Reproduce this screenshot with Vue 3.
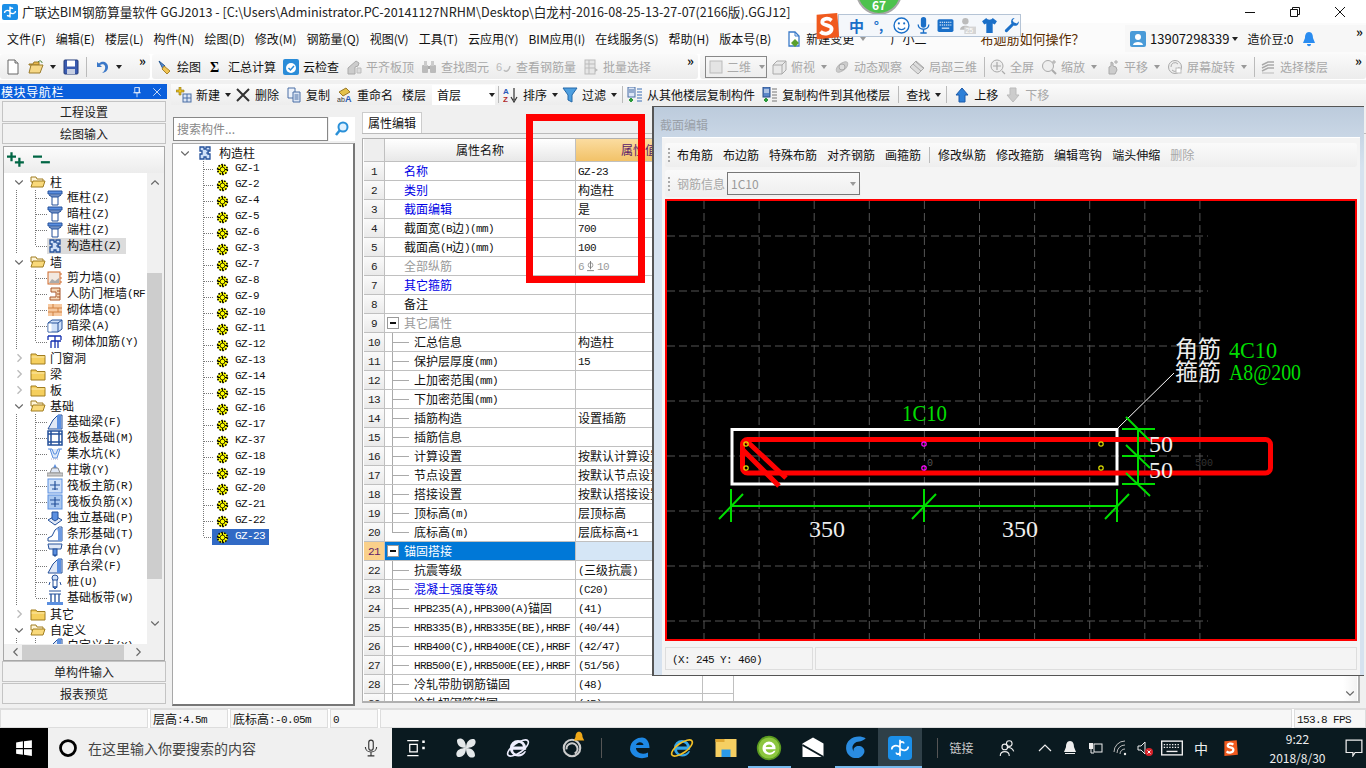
<script setup>
import { h } from 'vue'

const icons = {
  logo: '<rect x="0" y="0" width="16" height="16" rx="2" fill="#1b8fe8"/><path d="M8 2.500v11M8 5.500c0-2 2.500-2 2.500-.5M8 10.500c0 2-2.500 2-2.500.5M2.500 9c0-2.500 3-3.500 5.500-1.500M13.500 7c0 2.500-3 3.500-5.500 1.500" fill="none" stroke="#fff" stroke-width="1.400"/>',
  doc: '<path d="M3 1h7l3 3v11H3z" fill="#fff" stroke="#666"/><path d="M10 1v3h3" fill="#ddd" stroke="#666"/>',
  open: '<path d="M1 5h4l1-2h5v3H1z" fill="#e8b84a" stroke="#9a7a2a"/><path d="M1 14l2-8h12l-3 8z" fill="#f6d887" stroke="#9a7a2a"/><path d="M10 3c2-2 4-1 4 1" fill="none" stroke="#3a7a2a"/>',
  save: '<rect x="1" y="1" width="14" height="14" rx="1" fill="#3a5bb0" stroke="#223a78"/><rect x="4" y="1.500" width="8" height="6" fill="#fff"/><rect x="4" y="10" width="8" height="5" fill="#c7cfe2"/>',
  undo: '<path d="M3 3v5h5L6 6c3-2 6 0 5 4-.4 1.500-1.500 3-3 4 4-.5 6-3 6-6C14 3 8 1 5 4.500z" fill="#3b78c8"/>',
  brush: '<path d="M2 2l6 5-2 3z" fill="#5a8fd8" stroke="#23558f"/><path d="M7 7l6 5-3 3-5-5z" fill="#f1c453" stroke="#a9832a"/>',
  sigma: '<text x="2" y="13" font-size="14" font-weight="700" font-family="Liberation Serif">Σ</text>',
  cloud: '<rect x="0" y="0" width="16" height="16" rx="2" fill="#2a8cd8"/><circle cx="8" cy="9" r="5" fill="#fff"/><path d="M5.500 9l2 2 3.500-4" fill="none" stroke="#2a8cd8" stroke-width="1.500"/>',
  level: '<path d="M2 9l8-7 3 2-1 3-3 1v7H2z" fill="#ccc" stroke="#aaa"/><path d="M11 9h4v5h-4z" fill="#ddd" stroke="#bbb"/>',
  binoc: '<rect x="1" y="6" width="6" height="8" rx="1" fill="#bbb"/><rect x="9" y="6" width="6" height="8" rx="1" fill="#bbb"/><rect x="3" y="2" width="3" height="5" fill="#ccc"/><rect x="10" y="2" width="3" height="5" fill="#ccc"/><rect x="7" y="7" width="2" height="3" fill="#aaa"/>',
  eye: '<text x="0" y="12" font-size="11" fill="#bbb" font-family="Liberation Sans">6</text><path d="M8 11c1 2 5 2 6-4" fill="none" stroke="#bbb" stroke-width="1.500"/>',
  batch: '<rect x="2" y="1" width="10" height="14" fill="#e6e6e6" stroke="#bbb"/><path d="M2 5h10M2 9h10M6 1v14" stroke="#bbb"/><path d="M12 9l3 2-3 2z" fill="#bbb"/>',
  box2d: '<rect x="2" y="2" width="12" height="12" fill="#e4e4e4" stroke="#bbb"/>',
  box3d: '<path d="M2 6l4-4h9v9l-4 4H2z" fill="#e9e9e9" stroke="#aaa"/><path d="M2 6h9v9M11 6l4-4" fill="none" stroke="#aaa"/>',
  orbit: '<ellipse cx="8" cy="8" rx="7" ry="3.500" transform="rotate(-40 8 8)" fill="#ccc" stroke="#bbb"/><circle cx="8" cy="8" r="3" fill="#ddd" stroke="#aaa"/>',
  local: '<path d="M1 8l6-6 8 7-6 6z" fill="#ddd" stroke="#aaa"/><path d="M4 5l8 7M7 3l7 6" stroke="#aaa"/>',
  zf: '<circle cx="7" cy="7" r="6" fill="#eee" stroke="#aaa"/><path d="M7 3v8M3 7h8M12 12l3 3" stroke="#aaa" stroke-width="1.200"/>',
  zoom: '<circle cx="7" cy="7" r="5.500" fill="#eee" stroke="#aaa"/><path d="M11 11l4 4" stroke="#aaa" stroke-width="2"/><path d="M13 1v4M11 3h4" stroke="#aaa"/>',
  pan: '<path d="M5 15V8l2-1V3l2 1v3l3 1 1 3-2 4z" fill="#ccc" stroke="#aaa"/><path d="M12 1v4M10 3h4" stroke="#aaa"/>',
  rotate: '<circle cx="8" cy="8" r="6.500" fill="#eee" stroke="#aaa"/><path d="M4 8a4 4 0 0 1 7-3M12 8a4 4 0 0 1-7 3" fill="none" stroke="#aaa"/><rect x="9" y="9" width="5" height="5" fill="#fff" stroke="#bbb"/>',
  floors: '<path d="M2 6l6-3h6M2 9l6-3h6M2 12l6-3h6" fill="none" stroke="#aaa" stroke-width="1.500"/><path d="M2 14h12" stroke="#bbb"/>',
  newp: '<path d="M3 0v3H0v2h3v3h2V5h3V3H5V0z" fill="#e8c020" stroke="#8c7010" stroke-width=".6"/><rect x="7" y="7" width="8" height="8" fill="#dce6f5" stroke="#4a6fa5"/><path d="M7 11h8M11 7v8" stroke="#4a6fa5"/>',
  del: '<path d="M2 2l12 12M14 2L2 14" stroke="#333" stroke-width="2"/>',
  copy: '<path d="M2 1h7v10H2z" fill="#eef3fb" stroke="#4a6fa5"/><path d="M7 5h7v10H7z" fill="#dce6f5" stroke="#4a6fa5"/><path d="M8.500 8h4M8.500 10h4M8.500 12h4" stroke="#4a6fa5"/>',
  rename: '<path d="M2 5l7-4 4 4-7 4z" fill="#e5c14a" stroke="#9a7a2a"/><text x="0" y="15" font-size="7" fill="#333" font-family="Liberation Sans">ab</text><text x="8" y="15" font-size="9" font-weight="700" fill="#2a5bb8" font-family="Liberation Sans">A</text>',
  sort: '<text x="0" y="7" font-size="8" font-weight="700" fill="#2a5bb8" font-family="Liberation Sans">A</text><text x="0" y="15" font-size="8" font-weight="700" fill="#b02a2a" font-family="Liberation Sans">Z</text><path d="M11 1v12M8 10l3 5 3-5" fill="none" stroke="#333" stroke-width="1.200"/>',
  filter: '<path d="M1 1h14l-5 7v7l-4-2V8z" fill="#4d9fe0" stroke="#2468a8"/>',
  from: '<rect x="1" y="0" width="7" height="10" fill="#dce6f5" stroke="#4a6fa5"/><path d="M2 3h5M2 5h5" stroke="#4a6fa5"/><path d="M4 11v4M2 13h4" stroke="#2a9a3a" stroke-width="2"/><path d="M10 2h5M10 5h5M10 8h5M10 11h5M10 14h5" stroke="#3a6fb5"/>',
  to: '<rect x="1" y="0" width="7" height="10" fill="#5a86c8" stroke="#2a4f8a"/><path d="M2 3h5M2 5h5" stroke="#fff"/><path d="M4 11v4M2 13h4" stroke="#2a9a3a" stroke-width="2"/><path d="M10 2h5M10 5h5M10 8h5M10 11h5M10 14h5" stroke="#777"/>',
  up: '<path d="M8 1l6 7H11v7H5V8H2z" fill="#2c7fd8" stroke="#1c5aa8"/>',
  down: '<path d="M8 15l6-7H11V1H5v7H2z" fill="#ccc" stroke="#bbb"/>',
  plus2: '<path d="M4 1v8M0 5h8" stroke="#064" stroke-width="2"/><path d="M11 6v8M7 10h8" stroke="#064" stroke-width="2"/>',
  minus2: '<path d="M0 5h8" stroke="#064" stroke-width="2"/><path d="M7 10h8" stroke="#064" stroke-width="2"/>',
  fc: '<path d="M1 4h5l1 1.500h8V14H1z" fill="#f5cf5e" stroke="#a07d20"/><path d="M1.500 7h13" stroke="#fbe9ad"/>',
  fo: '<path d="M1 3h5l1 2h6v3H1z" fill="#fff5d8" stroke="#a07d20"/><path d="M1 13l2-6h12l-2 6z" fill="#f9d97a" stroke="#a07d20"/>',
  col: '<path d="M1 1h14v3H1z" fill="#5b8fe0" stroke="#24509a"/><path d="M2 5h12L11 7H5z" fill="#bcd0f0" stroke="#24509a"/><path d="M5 7h6v8H5z" fill="#fff" stroke="#24509a"/>',
  gzc: '<path d="M3 2h4v2h2V2h4v4h-2v3h2v5H9v-2H7v2H3V9h2V6H3z" fill="#cfe0f8" stroke="#24509a" stroke-width="1.300"/><path d="M9 5h3M9 8h3" stroke="#24509a"/>',
  shear: '<rect x="1" y="2" width="12" height="12" fill="#f2e8e0" stroke="#d06a2a"/><path d="M2 13l3-4 3 2 4-3v5z" fill="#aaa"/><path d="M13 4h2M13 8h2M13 12h2" stroke="#d06a2a"/>',
  rfw: '<path d="M4 2h9v12H3v-3h6V6H4z" fill="#f5d8b8" stroke="#a8562a"/><path d="M10 5h3M10 8h3M10 11h3" stroke="#a8562a"/>',
  brick: '<rect x="1" y="2" width="14" height="12" fill="#f7c9a0"/><path d="M1 6h14M1 10h14M6 2v4M11 6v4M6 10v4" stroke="#d08040"/>',
  beam: '<path d="M1 5l4-3h10v9l-4 3H1z" fill="#cfe0f8" stroke="#24509a"/><path d="M1 5h10v9M11 5l4-3" fill="none" stroke="#24509a"/><rect x="1.500" y="5.500" width="3" height="8" fill="#fff"/>',
  jj: '<path d="M1 2h13M1 2v4M14 2v4M4 7h10M8 2v12M4 7v7M11 7v7" fill="none" stroke="#1530b0" stroke-width="1.300"/>',
  jb: '<path d="M1 15l5-9 5-5h4v14z" fill="#e0e8f6" stroke="#24509a"/><path d="M10 1l4 0v14h-4z" fill="#5b8fe0"/>',
  raft: '<rect x="1" y="1" width="14" height="14" fill="#fff" stroke="#24509a" stroke-width="1.500"/><path d="M1 4h14M1 12h14M4 1v14M12 1v14" stroke="#24509a" stroke-width="1.500"/>',
  pit: '<path d="M1 3h4l2 5h2l2-5h4M3 3l3 9h4l3-9" fill="#dde8f8" stroke="#5b8fe0"/><path d="M4 13h8" stroke="#aac" stroke-dasharray="1 1"/>',
  dun: '<path d="M6 6l2-4 2 4z" fill="#5b8fe0"/><path d="M3 11l2-5h6l2 5z" fill="#e0e8f6" stroke="#888"/><rect x="0" y="11" width="16" height="3" fill="#ccc" stroke="#999"/>',
  rm: '<rect x="1" y="1" width="14" height="14" fill="#cfe0f8" stroke="#5b8fe0"/><path d="M3 7h10M8 3v9M5 11h6" stroke="#24509a" stroke-width="1.200"/>',
  rn: '<rect x="1" y="1" width="14" height="14" fill="#aac8f0" stroke="#5b8fe0"/><path d="M3 6h10M8 3v10M4 10h8" stroke="#24509a" stroke-width="1.200"/>',
  ind: '<path d="M1 10l7-4 7 4-7 5z" fill="#e0e8f6" stroke="#24509a"/><path d="M5 2h6v7l-3 2-3-2z" fill="#5b8fe0" stroke="#24509a"/>',
  strip: '<path d="M1 15v-3l4-2 3-6 4-3h3v14z" fill="#fff" stroke="#24509a"/><path d="M10 2h5v13h-4V6z" fill="#6d99e0"/>',
  cap: '<path d="M1 2h14l-1 5H2z" fill="#e0e8f6" stroke="#24509a"/><rect x="6" y="7" width="4" height="6" fill="#5b8fe0" stroke="#24509a"/><path d="M6 13h4l-2 2z" fill="#24509a"/>',
  pile: '<circle cx="8" cy="4" r="3" fill="#cfe0f8" stroke="#24509a"/><rect x="6" y="6" width="4" height="7" fill="#fff" stroke="#24509a"/><path d="M3 8l-1 3M13 8l1 3M6 13h4l-2 2z" fill="#5b8fe0" stroke="#24509a"/>',
  band: '<path d="M2 1h12M2 4h12" stroke="#24509a"/><path d="M4 4v8M8 4v8M12 4v8" stroke="#24509a" stroke-width="1.300"/><rect x="0" y="12" width="16" height="3" fill="#5b8fe0"/>',
  gi: '<circle cx="8" cy="8" r="6.500" fill="#ff0"/><circle cx="8" cy="8" r="6" fill="none" stroke="#000" stroke-width="2" stroke-dasharray="2 1.700"/><path d="M2 8h12M8 2v12" stroke="#000" stroke-width="1.300"/><circle cx="8" cy="8" r="3" fill="#ff0" stroke="#000"/>',
  search: '<circle cx="9" cy="6" r="4.500" fill="#dff1ff" stroke="#2a90d8" stroke-width="2"/><path d="M6 9l-4 5" stroke="#2a90d8" stroke-width="2.500"/>',
  pin: '<path d="M5 2h6v7H5zM3 9h10M8 9v6M11 2v7" fill="none" stroke="#fff"/>',
  x: '<path d="M3 3l10 10M13 3L3 13" stroke="#fff"/>',
  note: '<path d="M3 1h6l4 4v10H3z" fill="#fff" stroke="#3a7ac8" stroke-width="1.300"/><path d="M9 1v4h4" fill="none" stroke="#3a7ac8"/><path d="M9 8l4 4-4 4-4-4z" fill="#5aa02c"/>',
  user: '<rect width="16" height="16" rx="2" fill="#4a9bd8"/><circle cx="8" cy="6" r="3" fill="#fff"/><path d="M3 14c0-4 10-4 10 0z" fill="#fff"/>',
  bell: '<path d="M8 1c-3 0-4 3-4 6l-2 5h12l-2-5c0-3-1-6-4-6z" fill="#2a8cf0"/><path d="M6 13h4c0 3-4 3-4 0z" fill="#2a8cf0"/>',
  win: '<path d="M1 3l6-1v6H1zM8 2l7-1v7H8zM1 9h6v5l-6-1zM8 9h7v6l-7-1z" fill="#fff"/>',
  ring: '<circle cx="8" cy="8" r="6" fill="none" stroke="#000" stroke-width="2.200"/>',
  mic: '<rect x="6" y="1" width="4" height="9" rx="2" fill="none" stroke="#333"/><path d="M3 7c0 6 10 6 10 0M8 12v3M5 15h6" fill="none" stroke="#333"/>',
  tv: '<path d="M1 2h9M1 14h9M3 5h6v6H3z" fill="none" stroke="#fff"/><path d="M13 2h2v2h-2zM13 7h2v2h-2z" fill="#fff"/>',
  fan: '<path d="M8 8C3 8 2 5 2 3c0-2 6-3 6 5zM8 8c0-5 3-6 5-6 2 0 3 6-5 6zM8 8c5 0 6 3 6 5 0 2-6 3-6-5zM8 8c0 5-3 6-5 6-2 0-3-6 5-6z" fill="#e4e8ea"/>',
  ie: '<path d="M3 8a5 5 0 0 1 10 0v1H5c0 3 5 4 7 1h1c-2 5-10 4-10-2zm2-1h6c-.5-3-5-3-6 0z" fill="#eef"/><ellipse cx="8" cy="8" rx="7.500" ry="3" transform="rotate(-35 8 8)" fill="none" stroke="#eef"/>',
  swirl: '<circle cx="8" cy="8" r="6" fill="none" stroke="#ccc" stroke-width="1.500"/><path d="M4 9a4 4 0 1 1 6 3" fill="none" stroke="#ccc" stroke-width="1.500"/>',
  bellY: '<path d="M8 2c-3 0-4 3-4 6l-2 4h12l-2-4c0-3-1-6-4-6z" fill="#f0a818"/>',
  edge: '<path d="M2 9C2 3 7 1 10 1c3 0 5 3 5 7H6c0 3 4 5 8 3v3c-5 2-11 0-12-5zm4-3h5c0-2-4-3-5 0z" fill="#1e88e5"/>',
  iec: '<path d="M3 8a5 5 0 0 1 10 0v1H5c0 3 5 4 7 1h1c-2 5-10 4-10-2zm2-1h6c-.5-3-5-3-6 0z" fill="#35a7ea"/><ellipse cx="8" cy="8" rx="7.500" ry="3" transform="rotate(-35 8 8)" fill="none" stroke="#f2c028"/>',
  fold: '<path d="M1 2h14v12H1z" fill="#f6cf62"/><path d="M1 2h6v2H1z" fill="#e0a832"/><rect x="5" y="9" width="6" height="5" fill="#2a9ae8"/>',
  gre: '<circle cx="8" cy="8" r="7" fill="#8cc63f" stroke="#5a9a20"/><path d="M4 8a4 4 0 0 1 8 0v.7H6c0 2.300 3.500 3 5 1h1c-1.500 3.800-8 3-8-1.700zm2-.6h4c-.4-2-3.500-2-4 0z" fill="#fff"/>',
  mail: '<path d="M1 5l7-4 7 4v9H1z" fill="#fff"/><path d="M1 6l7 4 7 4" fill="none" stroke="#0a1a20" stroke-width="1.300"/>',
  gg: '<path d="M14 2C8-1 1 3 2 9c1 6 9 7 11 2 1-3-2-5-5-4-2 1-2 3 0 4-4-2-2-7 2-7 1 0 3-1 4-2z" fill="#2a8ce0"/>',
  app: '<rect width="16" height="16" rx="2.500" fill="#1b8fe8"/><path d="M8 2.500v11M8 5.500c0-2 2.500-2 2.500-.5M8 10.500c0 2-2.500 2-2.500.5M2.500 9c0-2.500 3-3.500 5.500-1.500M13.500 7c0 2.500-3 3.500-5.500 1.500" fill="none" stroke="#fff" stroke-width="1.100"/>',
  ppl: '<circle cx="10" cy="4" r="2.500" fill="none" stroke="#eee"/><circle cx="6" cy="7" r="2.500" fill="none" stroke="#eee"/><path d="M2 15c0-5 8-5 8 0M8 8c2-1 5 0 6 3" fill="none" stroke="#eee"/>',
  chev: '<path d="M2 11l6-6 6 6" fill="none" stroke="#eee" stroke-width="1.200"/>',
  bellW: '<path d="M8 1c-3 0-4 3-4 6l-2 5h12l-2-5c0-3-1-6-4-6z" fill="#eee"/><path d="M3 13h10v1H3z" fill="#eee"/>',
  plug: '<rect x="6" y="4" width="8" height="8" fill="none" stroke="#eee"/><rect x="1" y="3" width="4" height="6" fill="#eee"/><path d="M3 9v4h3" fill="none" stroke="#eee"/>',
  wifi: '<path d="M1 12a11 11 0 0 1 11-11M4 13a8 8 0 0 1 8-8M7 14a5 5 0 0 1 5-5" fill="none" stroke="#bbb"/><circle cx="12" cy="14" r="1.200" fill="#eee"/>',
  snd: '<path d="M1 6h3l4-4v12l-4-4H1z" fill="none" stroke="#eee"/><circle cx="12" cy="12" r="4" fill="#d8232a"/><path d="M10.500 10.500l3 3M13.500 10.500l-3 3" stroke="#fff"/>',
  kb: '<rect x="0.500" y="3" width="15" height="10" fill="none" stroke="#eee"/><path d="M2 5.500h12M2 7.500h12" stroke="#eee" stroke-dasharray="1 1"/><path d="M4 10.500h8" stroke="#eee"/>',
  sogou: '<path d="M3 2l11-1 1 13-12 1z" fill="#f05a1e"/><path d="M11 5c-2-1.500-5-1-5 1s5 1 5 3.500S7 13 5 11" fill="none" stroke="#fff" stroke-width="2"/>',
  notif: '<path d="M1 1h14v11H9l-2 3v-3H1z" fill="none" stroke="#eee" stroke-width="1.100"/>',
  smile: '<circle cx="8" cy="8" r="7" fill="#fff" stroke="#1a6fc8" stroke-width="1.300"/><circle cx="5.500" cy="6" r="1" fill="#1a6fc8"/><circle cx="10.500" cy="6" r="1" fill="#1a6fc8"/><path d="M4.500 10c1.500 2.500 5.500 2.500 7 0" fill="none" stroke="#1a6fc8"/>',
  micb: '<rect x="5.500" y="0" width="5" height="10" rx="2.500" fill="#1a6fc8"/><path d="M3 7c0 6 10 6 10 0M8 12v3M5 15h6" fill="none" stroke="#1a6fc8" stroke-width="1.300"/>',
  kbb: '<rect x="0.500" y="2" width="15" height="12" rx="1.500" fill="#1a6fc8"/><path d="M2.500 5h11M2.500 7.500h11" stroke="#fff" stroke-dasharray="1.200 .8"/><path d="M4.500 10.500h7" stroke="#fff"/>',
  p25: '<circle cx="6" cy="4" r="3" fill="#bbb"/><path d="M1 12c0-5 10-5 10 0z" fill="#bbb"/><rect x="5" y="9" width="11" height="7" fill="#d5d5d5"/><text x="6" y="15" font-size="6.500" fill="#fff" font-family="Liberation Sans">25</text>',
  shirt: '<path d="M5 1L1 4l2 3 2-1v9h6V6l2 1 2-3-4-3c-1 2-5 2-6 0z" fill="#1a6fc8"/>',
  wrench: '<path d="M11 1c-3 0-4 3-3 5l-6 6c-1 2 1 3 2 2l6-6c3 1 5-1 5-4l-2 2-3-1-1-2z" fill="#1a6fc8"/>',
  dnv: '<path d="M3 6l5 5 5-5" fill="none" stroke="#666" stroke-width="1.500"/>',
  upv: '<path d="M3 10l5-5 5 5" fill="none" stroke="#666" stroke-width="1.500"/>',
  lfv: '<path d="M10 3l-5 5 5 5" fill="none" stroke="#666" stroke-width="1.500"/>',
  rtv: '<path d="M6 3l5 5-5 5" fill="none" stroke="#666" stroke-width="1.500"/>',
  rtg: '<path d="M6 3l5 5-5 5" fill="none" stroke="#bbb" stroke-width="1.800"/>',
  rebar: '<circle cx="8" cy="6" r="3.500" fill="none" stroke="#777"/><path d="M8 0v12M3 14h10" stroke="#777" stroke-width="1.300"/>',
}

const Ico = (p) => h('svg', { width: p.s || 16, height: p.s || 16, viewBox: '0 0 16 16', innerHTML: icons[p.n], class: 'ico' })
Ico.props = ['n', 's']

// Latin runs are in a half-width bitmap face in the reference
const T = (p) => h('span', null, String(p.text).split(/([\x00-\x7f]+)/).filter(Boolean).map((s) =>
  /^[\x00-\x7f]/.test(s) ? h('span', { class: 'lat' }, s) : s))
T.props = ['text']

const menus = [['文件(F)'], ['编辑(E)'], ['楼层(L)'], ['构件(N)'], ['绘图(D)'], ['修改(M)'], ['钢筋量(Q)'], ['视图(V)'], ['工具(T)'], ['云应用(Y)'], ['BIM应用(I)'], ['在线服务(S)'], ['帮助(H)'], ['版本号(B)']]

const tbA = [{ i: 'doc' }, { i: 'open', c: 1 }, { i: 'save' }, { s: 1 }, { i: 'undo', c: 1 }]
const tbB = [
  { i: 'brush', t: '绘图' }, { i: 'sigma', t: '汇总计算' }, { i: 'cloud', t: '云检查' },
  { i: 'level', t: '平齐板顶', g: 1 }, { i: 'binoc', t: '查找图元', g: 1 }, { i: 'eye', t: '查看钢筋量', g: 1 }, { i: 'batch', t: '批量选择', g: 1 },
]
const tbC = [
  { i: 'box3d', t: '俯视', g: 1, c: 1 }, { i: 'orbit', t: '动态观察', g: 1 }, { i: 'local', t: '局部三维', g: 1 }, { s: 1 },
  { i: 'zf', t: '全屏', g: 1 }, { i: 'zoom', t: '缩放', g: 1, c: 1 }, { i: 'pan', t: '平移', g: 1, c: 1 }, { i: 'rotate', t: '屏幕旋转', g: 1, c: 1 }, { s: 1 }, { i: 'floors', t: '选择楼层', g: 1 },
]
const tb2L = [{ i: 'newp', t: '新建', c: 1 }, { i: 'del', t: '删除' }, { i: 'copy', t: '复制' }, { i: 'rename', t: '重命名' }]
const tb2R = [
  { s: 1, tight: 1 }, { i: 'sort', t: '排序', c: 1 }, { i: 'filter', t: '过滤', c: 1 }, { s: 1, tight: 1 }, { i: 'from', t: '从其他楼层复制构件' }, { i: 'to', t: '复制构件到其他楼层' }, { s: 1 },
  { t: '查找', c: 1 }, { s: 1 }, { i: 'up', t: '上移' }, { i: 'down', t: '下移', g: 1 },
]

const nav = [
  { t: '柱', o: 1 }, { t: '框柱(Z)', i: 'col' }, { t: '暗柱(Z)', i: 'col' }, { t: '端柱(Z)', i: 'col' }, { t: '构造柱(Z)', i: 'gzc', sel: 1, last: 1 },
  { t: '墙', o: 1 }, { t: '剪力墙(Q)', i: 'shear' }, { t: '人防门框墙(RF', i: 'rfw' }, { t: '砌体墙(Q)', i: 'brick' }, { t: '暗梁(A)', i: 'beam' }, { t: '砌体加筋(Y)', i: 'jj', last: 1, wide: 1 },
  { t: '门窗洞' }, { t: '梁' }, { t: '板' },
  { t: '基础', o: 1 }, { t: '基础梁(F)', i: 'jb' }, { t: '筏板基础(M)', i: 'raft' }, { t: '集水坑(K)', i: 'pit' }, { t: '柱墩(Y)', i: 'dun' }, { t: '筏板主筋(R)', i: 'rm' }, { t: '筏板负筋(X)', i: 'rn' }, { t: '独立基础(P)', i: 'ind' }, { t: '条形基础(T)', i: 'strip' }, { t: '桩承台(V)', i: 'cap' }, { t: '承台梁(F)', i: 'jb' }, { t: '桩(U)', i: 'pile' }, { t: '基础板带(W)', i: 'band', last: 1 },
  { t: '其它' }, { t: '自定义', o: 1 }, { t: '自定义点(X)', i: 'jb' },
]

const gz = ['GZ-1', 'GZ-2', 'GZ-4', 'GZ-5', 'GZ-6', 'GZ-3', 'GZ-7', 'GZ-8', 'GZ-9', 'GZ-10', 'GZ-11', 'GZ-12', 'GZ-13', 'GZ-14', 'GZ-15', 'GZ-16', 'GZ-17', 'KZ-37', 'GZ-18', 'GZ-19', 'GZ-20', 'GZ-21', 'GZ-22', 'GZ-23']

const props = [
  { n: '名称', v: 'GZ-23', c: 'blue' }, { n: '类别', v: '构造柱', c: 'blue' }, { n: '截面编辑', v: '是', c: 'blue' },
  { n: '截面宽(B边)(mm)', v: '700' }, { n: '截面高(H边)(mm)', v: '100' }, { n: '全部纵筋', v: '6', rebar: '10', c: 'gray' },
  { n: '其它箍筋', v: '', c: 'blue' }, { n: '备注', v: '' }, { n: '其它属性', v: '', c: 'gray', box: 1 },
  { n: '汇总信息', v: '构造柱', k: 1 }, { n: '保护层厚度(mm)', v: '15', k: 1 }, { n: '上加密范围(mm)', v: '', k: 1 }, { n: '下加密范围(mm)', v: '', k: 1 },
  { n: '插筋构造', v: '设置插筋', k: 1 }, { n: '插筋信息', v: '', k: 1 }, { n: '计算设置', v: '按默认计算设置计算', k: 1 }, { n: '节点设置', v: '按默认节点设置计算', k: 1 }, { n: '搭接设置', v: '按默认搭接设置计算', k: 1 },
  { n: '顶标高(m)', v: '层顶标高', k: 1 }, { n: '底标高(m)', v: '层底标高+1', k: 1, end: 1 },
  { n: '锚固搭接', v: '', box: 1, sel: 1 }, { n: '抗震等级', v: '(三级抗震)', k: 1 }, { n: '混凝土强度等级', v: '(C20)', k: 1, c: 'blue' },
  { n: 'HPB235(A),HPB300(A)锚固', v: '(41)', k: 1 }, { n: 'HRB335(B),HRB335E(BE),HRBF', v: '(40/44)', k: 1 }, { n: 'HRB400(C),HRB400E(CE),HRBF', v: '(42/47)', k: 1 }, { n: 'HRB500(E),HRB500E(EE),HRBF', v: '(51/56)', k: 1 },
  { n: '冷轧带肋钢筋锚固', v: '(48)', k: 1 }, { n: '冷轧扭钢筋锚固', v: '(45)', k: 1 },
]

const dlgTools = ['布角筋', '布边筋', '特殊布筋', '对齐钢筋', '画箍筋', null, '修改纵筋', '修改箍筋', '编辑弯钩', '端头伸缩']

const gridX = Array.from({ length: 10 }, (_, i) => 704 + i * 55.1)
const gridY = Array.from({ length: 8 }, (_, i) => 236 + i * 55)

const taskA = [{ i: 'tv', w: 48, s: 20 }, { i: 'fan', w: 52, s: 24 }, { i: 'ie', w: 52, s: 26 }, { i: 'swirl', w: 56, s: 22, bell: 1 }]
const taskB = [{ i: 'edge', s: 24 }, { i: 'iec', s: 26 }, { i: 'fold', s: 24 }, { i: 'gre', s: 26, u: 1 }, { i: 'mail', s: 24 }, { i: 'gg', s: 26, u: 1 }, { i: 'app', s: 24, u: 1, a: 1 }]
const tray = [{ i: 'chev', w: 25 }, { i: 'bellW', w: 25 }, { i: 'plug', w: 26 }, { i: 'wifi', w: 24 }, { i: 'snd', w: 25 }, { i: 'kb', w: 29, s: 22 }]
</script>

<template>
  <div class="app">
    <div class="titlebar">
      <Ico n="logo" />
      <span class="ttl">广联达BIM钢筋算量软件 GGJ2013 - [C:\Users\Administrator.PC-20141127NRHM\Desktop\白龙村-2016-08-25-13-27-07(2166版).GGJ12]</span>
      <div class="winbtns">
        <svg width="12" height="12" viewBox="0 0 12 12"><path d="M1 6.500h10" stroke="#111" /></svg>
        <svg width="12" height="12" viewBox="0 0 12 12"><path d="M1.500 3.500h7v7h-7zM3.500 3.500v-2h7v7h-2" fill="none" stroke="#111" /></svg>
        <svg width="12" height="12" viewBox="0 0 12 12"><path d="M1 1l10 10M11 1L1 11" stroke="#111" /></svg>
      </div>
    </div>

    <div class="menubar">
      <span v-for="m in menus" :key="m[0]" class="mi">{{ m[0] }}</span>
      <div class="mi-new"><Ico n="note" /><span>新建变更</span><i class="caret"></i></div>
      <span class="mi-xe">广小二</span>
      <span class="mi-ask">布迦筋如何操作？</span>
      <div class="userbox">
        <Ico n="user" /><span class="phone">13907298339</span><i class="caret dark"></i>
        <span class="bean">造价豆:0</span><Ico n="bell" />
        <span class="more">»</span>
      </div>
    </div>

    <div class="tb1">
      <div class="seg seg-a">
        <template v-for="(it, k) in tbA" :key="k">
          <span v-if="it.s" class="sep"></span>
          <span v-else class="ti"><Ico :n="it.i" /><i v-if="it.c" class="caret dark"></i></span>
        </template>
        <span class="more seg-more">»</span>
      </div>
      <div class="seg seg-b">
        <span v-for="it in tbB" :key="it.t" class="ti" :class="{ off: it.g }"><Ico :n="it.i" /><span>{{ it.t }}</span></span>
        <span class="more seg-more">»</span>
      </div>
      <div class="seg seg-c">
        <div class="combo2d"><Ico n="box2d" /><span>二维</span><i class="caret"></i></div>
        <template v-for="(it, k) in tbC" :key="k">
          <span v-if="it.s" class="sep"></span>
          <span v-else class="ti off"><Ico :n="it.i" /><span>{{ it.t }}</span><i v-if="it.c" class="caret"></i></span>
        </template>
        <span class="more seg-more">»</span>
      </div>
    </div>

    <div class="main">
      <aside class="left">
        <div class="navhead"><span class="navt">模块导航栏</span><span class="navbtns"><Ico n="pin" :s="12" /><Ico n="x" :s="12" /></span></div>
        <div class="lbtn first">工程设置</div>
        <div class="lbtn">绘图输入</div>
        <div class="treewrap">
          <div class="treetools"><Ico n="plus2" :s="18" /><Ico n="minus2" :s="18" /></div>
          <div class="treebody">
            <div class="treeclip">
              <div v-for="r in nav" :key="r.t" class="nrow" :class="{ kid: r.i, lastk: r.last }">
                <template v-if="r.i">
                  <span class="nic" :class="{ sel: r.sel }"><Ico :n="r.i" /><span class="nt" :class="{ w: r.wide }"><T :text="r.t" /></span></span>
                </template>
                <template v-else>
                  <Ico :n="r.o ? 'dnv' : 'rtg'" :s="12" class="ar" />
                  <Ico :n="r.o ? 'fo' : 'fc'" />
                  <span class="nf">{{ r.t }}</span>
                </template>
              </div>
            </div>
            <div class="vsb"><Ico n="upv" :s="12" /><div class="vthumb"></div><Ico n="dnv" :s="12" /></div>
          </div>
          <div class="hsb"><Ico n="lfv" :s="12" /><div class="hthumb"></div><Ico n="rtv" :s="12" /></div>
        </div>
        <div class="lbtn">单构件输入</div>
        <div class="lbtn">报表预览</div>
      </aside>

      <div class="right">
        <div class="tb2">
          <span v-for="it in tb2L" :key="it.t" class="ti"><Ico :n="it.i" /><span>{{ it.t }}</span><i v-if="it.c" class="caret dark"></i></span>
          <span class="lvl">楼层</span>
          <div class="lvlcombo"><span>首层</span><i class="caret dark"></i></div>
          <template v-for="(it, k) in tb2R" :key="k">
            <span v-if="it.s" class="sep" :class="{ tight: it.tight }"></span>
            <span v-else class="ti" :class="{ off: it.g }"><Ico v-if="it.i" :n="it.i" /><span>{{ it.t }}</span><i v-if="it.c" class="caret dark"></i></span>
          </template>
        </div>
        <div class="work">
          <div class="mid">
            <div class="searchrow"><span class="searchbox">搜索构件...</span><span class="searchbtn"><Ico n="search" /></span></div>
            <div class="gztree">
              <div class="grow head"><Ico n="dnv" :s="12" class="ar2" /><Ico n="gzc" /><span class="gh">构造柱</span></div>
              <div v-for="(g, k) in gz" :key="g" class="grow gk" :class="{ lastk: k === gz.length - 1 }">
                <span class="gitem" :class="{ sel: g === 'GZ-23' }"><Ico n="gi" :s="13" /><span class="lat gt">{{ g }}</span></span>
              </div>
            </div>
          </div>

          <div class="prop">
            <div class="tabs"><span class="tab">属性编辑</span></div>
            <div class="ptable">
              <div class="pcols">
                <div class="prow phead">
                  <span class="gut"></span><span class="pn hn">属性名称</span><span class="pv hv">属性值</span><span class="px"></span>
                </div>
                <div v-for="(r, k) in props" :key="k" class="prow" :class="{ psel: r.sel }">
                  <span class="gut"><span class="lat">{{ k + 1 }}</span></span>
                  <span class="pn" :class="[r.c, { kid: r.k, kend: r.end }]">
                    <span v-if="r.box" class="minus"><i></i></span>
                    <T :text="r.n" />
                  </span>
                  <span class="pv" :class="{ gray: r.c === 'gray' }">
                    <T :text="r.v" />
                    <template v-if="r.rebar"><Ico n="rebar" :s="11" class="rb" /><span class="lat">{{ r.rebar }}</span></template>
                  </span>
                  <span class="px"></span>
                </div>
              </div>
              <div class="psb"><Ico n="dnv" :s="12" /></div>
            </div>
          </div>
        </div>
      </div>
    </div>

    <div class="status">
      <span class="sc s1"></span>
      <span class="sc s2"><T text="层高:4.5m" /></span>
      <span class="sc s3"><T text="底标高:-0.05m" /></span>
      <span class="sc s4"><T text="0" /></span>
      <span class="sc s5"></span>
      <span class="sc s6"><T text="153.8 FPS" /></span>
    </div>

    <div class="taskbar">
      <div class="tstart"><Ico n="win" :s="18" /></div>
      <div class="tsearch"><Ico n="ring" :s="20" /><span class="tq">在这里输入你要搜索的内容</span><Ico n="mic" :s="18" class="tmic" /></div>
      <span v-for="it in taskA" :key="it.i" class="tsk" :style="{ width: it.w + 'px' }">
        <Ico :n="it.i" :s="it.s" /><Ico v-if="it.bell" n="bellY" :s="14" class="tbell" />
      </span>
      <span class="tsep"></span>
      <span class="tgap"></span>
      <span v-for="it in taskB" :key="it.i" class="tsb" :class="{ act: it.a, und: it.u }"><Ico :n="it.i" :s="it.s" /></span>
      <span class="tsep t2"></span>
      <span class="tlink">链接</span>
      <span class="tppl"><Ico n="ppl" :s="18" /></span>
      <span v-for="it in tray" :key="it.i" class="ttr" :style="{ width: it.w + 'px' }"><Ico :n="it.i" :s="it.s || 16" /></span>
      <span class="tzh">中</span>
      <span class="tsg"><Ico n="sogou" :s="18" /></span>
      <span class="clock"><span>9:22</span><span>2018/8/30</span></span>
      <span class="tnotif"><Ico n="notif" :s="18" /></span>
    </div>

    <!-- floating section editor window -->
    <section class="dlg">
      <header class="dlgt">截面编辑</header>
      <div class="dlgc">
        <div class="dtb">
          <span class="grip"></span>
          <template v-for="(t, k) in dlgTools" :key="k">
            <span v-if="!t" class="sep"></span>
            <span v-else class="dti">{{ t }}</span>
          </template>
          <span class="dti off">删除</span>
        </div>
        <div class="dtb2">
          <span class="grip"></span><span class="off">钢筋信息</span>
          <div class="dcombo"><span>1C10</span><i class="caret"></i></div>
        </div>
        <div class="canvas">
          <svg width="688" height="438" viewBox="667 201 688 438" class="cv">
            <g stroke="#555" stroke-dasharray="8 4" stroke-width="1">
              <line v-for="x in gridX" :key="x" :x1="x" :x2="x" y1="201" y2="639" />
              <line v-for="y in gridY" :key="y" x1="667" x2="1208" :y1="y" :y2="y" />
            </g>
            <rect x="732" y="429.500" width="385" height="54.500" fill="none" stroke="#fff" stroke-width="3" />
            <path d="M1118 428l56-55" stroke="#fff" fill="none" />
            <g fill="none" stroke="#f00" stroke-width="5">
              <rect x="742.500" y="439.500" width="528" height="33.500" rx="5" />
              <path d="M745.500 440l40.500 38M743 450l36 36" />
            </g>
            <g fill="none" stroke-width="1.200">
              <circle cx="746" cy="444" r="2.200" stroke="#dd0" /><circle cx="746" cy="468" r="2.200" stroke="#dd0" />
              <circle cx="1101" cy="444" r="2.200" stroke="#dd0" /><circle cx="1101" cy="468" r="2.200" stroke="#dd0" />
              <circle cx="924" cy="444" r="2.200" stroke="#f0f" /><circle cx="924" cy="468" r="2.200" stroke="#f0f" />
            </g>
            <g stroke="#0d0" stroke-width="2" fill="none">
              <path d="M731 506h386M731 489v33M924 489v33M1117 489v33" />
              <path d="M719 519l24-25M912 519l24-25M1105 519l24-25" />
              <path d="M1138 429v55M1122 429h33M1122 456h33M1122 484h33" />
              <path d="M1126 417l24 24M1126 445l24 23M1126 473l24 23" />
            </g>
            <text x="927" y="466" class="cvs" fill="#555">0</text>
            <text x="1195" y="466" class="cvs" fill="#333">500</text>
            <g class="cvt">
              <text x="902" y="421" fill="#0d0" textLength="45" lengthAdjust="spacingAndGlyphs">1C10</text>
              <text x="809" y="537" fill="#eee">350</text>
              <text x="1002" y="537" fill="#eee">350</text>
              <text x="1149" y="452" fill="#eee">50</text>
              <text x="1149" y="478" fill="#eee">50</text>
              <text x="1229" y="358" fill="#0d0" textLength="48" lengthAdjust="spacingAndGlyphs">4C10</text>
              <text x="1229" y="380" fill="#0d0" textLength="72" lengthAdjust="spacingAndGlyphs">A8@200</text>
              <text x="1175" y="357" fill="#eee" class="cj">角筋</text>
              <text x="1175" y="380" fill="#eee" class="cj">箍筋</text>
            </g>
          </svg>
        </div>
        <div class="dstatus"><span class="d1"><span class="lat">(X: 245 Y: 460)</span></span><span class="d2"></span></div>
      </div>
    </section>

    <!-- red markup drawn over the screenshot -->
    <div class="mark"></div>

    <!-- input-method bar and its floating widgets -->
    <div class="badge"><span>67</span></div>
    <div class="ime">
      <span class="imz">中</span><span class="imd">°,</span>
      <Ico n="smile" :s="17" /><Ico n="micb" :s="17" /><Ico n="kbb" :s="17" /><Ico n="p25" :s="17" /><Ico n="shirt" :s="17" /><Ico n="wrench" :s="17" />
    </div>
    <div class="imelogo"><Ico n="sogou" :s="30" /></div>
  </div>
</template>

<style scoped>
.app { width: 1366px; height: 768px; position: relative; overflow: hidden; display: flex; flex-direction: column; background: #f0f0f0; color: #111; font: 12px/16px "Noto Sans CJK SC", "Liberation Sans", sans-serif; white-space: nowrap; }
.ico { flex: none; display: block; }
i { font-style: normal; }

.titlebar { height: 23px; flex: none; display: flex; align-items: center; background: #fff; padding-left: 2px; }
.ttl { margin-left: 4px; font-size: 12.600px; color: #222; }
.winbtns { margin-left: auto; display: flex; gap: 33px; padding-right: 20px; }

.menubar { height: 31px; flex: none; display: flex; align-items: center; background: #fbfbfb; padding-left: 7px; }
.mi { margin-right: 10px; }
.mi-new { display: flex; align-items: center; gap: 4px; margin-left: 5px; }
.mi-xe { margin-left: 24px; }
.mi-ask { margin-left: 54px; color: #5a2d00; font-size: 13px; }
.userbox { margin-left: auto; width: 241px; height: 27px; display: flex; align-items: center; gap: 4px; background: #f7f7f7; padding-left: 5px; box-sizing: border-box; }
.phone { font-size: 13px; }
.userbox .caret { margin-left: -1px; }
.bean { margin-left: 5px; }
.userbox .ico:nth-of-type(2) { margin-left: 4px; }
.more { font-size: 13px; line-height: 14px; font-weight: 700; color: #111; margin-left: auto; padding-right: 3px; align-self: flex-start; }

.caret { display: inline-block; width: 0; height: 0; border: 3px solid transparent; border-top: 4px solid #999; border-bottom: 0; margin-left: 2px; flex: none; }
.caret.dark { border-top-color: #222; }

.tb1 { height: 26px; flex: none; margin-bottom: 4px; display: flex; gap: 2px; background: #fff; }
.seg { display: flex; align-items: center; gap: 7px; background: linear-gradient(#fafafa, #ececec); border-radius: 3px; height: 25px; }
.seg-a { width: 150px; padding-left: 5px; box-sizing: border-box; }
.seg-b { width: 546px; padding-left: 5px; box-sizing: border-box; }
.seg-c { flex: 1; padding-left: 5px; }
.seg-c .sep { margin-right: -2px; }
.seg-more { padding-right: 4px; }
.ti { display: inline-flex; align-items: center; gap: 4px; }
.off { color: #a8a8a8; }
.sep { width: 1px; height: 20px; background: #bbb; flex: none; }
.combo2d { width: 62px; height: 22px; box-sizing: border-box; border: 1px solid #888; display: flex; align-items: center; gap: 3px; color: #aaa; padding-left: 2px; margin-right: -3px; }
.combo2d .caret { margin-left: 5px; }

.main { flex: 1; min-height: 0; display: flex; background: #f0f0f0; }

.left { width: 167px; flex: none; display: flex; flex-direction: column; }
.navhead { height: 15px; flex: none; background: #0a5fdc; color: #fff; display: flex; align-items: center; justify-content: space-between; padding: 0 2px 0 1px; }
.navt { letter-spacing: .6px; }
.navbtns { display: flex; gap: 8px; padding-right: 2px; }
.lbtn { height: 21px; flex: none; margin: 0 1px 1px 2px; box-sizing: border-box; border: 1px solid #c4c4c4; background: #f2f2f2; display: flex; align-items: center; justify-content: center; color: #222; }
.lbtn.first { margin-top: 2px; }
.treewrap { height: 515px; flex: none; margin: 1px 2px 0 3px; box-sizing: border-box; border: 1px solid #a8a8a8; padding-right: 2px; display: flex; flex-direction: column; background: #f0f0f0; }
.treetools { height: 26px; flex: none; display: flex; align-items: center; gap: 8px; padding-left: 3px; background: linear-gradient(#fcfcfc, #ececec); margin-right: -2px; }
.treebody { flex: 1; min-height: 0; display: flex; }
.treeclip { flex: 1; min-width: 0; overflow: hidden; background: #fff; padding-top: 1px; }
.nrow { height: 16px; display: flex; align-items: center; padding-left: 9px; }
.nrow .ar { margin-right: 5px; }
.nf { margin-left: 4px; font-size: 12px; }
.nrow.kid {
  background:
    repeating-linear-gradient(#777 0 1px, transparent 1px 2px) 12px 0/1px 100% no-repeat,
    repeating-linear-gradient(#777 0 1px, transparent 1px 2px) 31px 0/1px 100% no-repeat,
    repeating-linear-gradient(90deg, #777 0 1px, transparent 1px 2px) 32px 8px/12px 1px no-repeat;
  padding-left: 43px;
}
.nrow.kid.lastk {
  background:
    repeating-linear-gradient(#777 0 1px, transparent 1px 2px) 12px 0/1px 100% no-repeat,
    repeating-linear-gradient(#777 0 1px, transparent 1px 2px) 31px 0/1px 8px no-repeat,
    repeating-linear-gradient(90deg, #777 0 1px, transparent 1px 2px) 32px 8px/12px 1px no-repeat;
}
.nic { display: flex; align-items: center; height: 16px; }
.nic.sel { background: #dcdcdc; padding-right: 5px; }
.nt { margin-left: 4px; }
.nt.w { margin-left: 9px; }
.vsb { width: 15px; flex: none; display: flex; flex-direction: column; align-items: center; background: #f0f0f0; padding-top: 4px; box-sizing: border-box; }
.vthumb { width: 15px; height: 306px; background: #cdcdcd; margin: 84px 0 38px; flex: none; }
.hsb { height: 16px; flex: none; display: flex; align-items: center; background: #f0f0f0; padding-left: 6px; }
.hthumb { width: 102px; height: 15px; background: #cdcdcd; margin: 0 8px 0 0; }

.right { flex: 1; min-width: 0; display: flex; flex-direction: column; }
.tb2 { height: 21px; flex: none; display: flex; align-items: center; gap: 7px; padding-left: 5px; margin-left: 4px; background: linear-gradient(#fbfbfb, #ededed); box-sizing: border-box; }
.tb2 .sep { height: 17px; }
.tb2 .sep.tight { margin-right: -3px; }
.tb2 .caret { margin: 0 -3px 0 1px; }
.lvl { margin-left: 2px; }
.lvlcombo { width: 63px; height: 20px; display: flex; align-items: center; justify-content: space-between; background: #fff; padding: 0 3px 0 5px; box-sizing: border-box; margin: 0 -4px 0 -1px; }
.tb2 .ti + .sep { margin-left: 1px; }
.work { flex: 1; min-height: 0; display: flex; }

.mid { width: 183px; margin-left: 5px; flex: none; display: flex; flex-direction: column; }
.searchrow { height: 24px; flex: none; margin: 12px 0 2px 0; display: flex; gap: 1px; }
.searchbox { width: 155px; box-sizing: border-box; border: 1px solid #888; background: #fff; color: #888; padding: 3px 3px; margin-left: 1px; }
.searchbtn { flex: 1; background: #fff; display: flex; align-items: center; justify-content: center; }
.gztree { flex: 1; min-height: 0; box-sizing: border-box; margin-bottom: 2px; border: 1px solid #a8a8a8; border-right: 2px solid #777; border-bottom: 2px solid #777; background: #fff; padding-top: 1px; overflow: hidden; }
.grow { height: 16px; display: flex; align-items: center; }
.grow.head { padding-left: 6px; }
.ar2 { margin-right: 6px; }
.gh { margin-left: 6px; }
.grow.gk {
  padding-left: 39px;
  background:
    repeating-linear-gradient(#777 0 1px, transparent 1px 2px) 30px 0/1px 100% no-repeat,
    repeating-linear-gradient(90deg, #777 0 1px, transparent 1px 2px) 31px 8px/9px 1px no-repeat;
}
.grow.gk.lastk {
  background:
    repeating-linear-gradient(#777 0 1px, transparent 1px 2px) 30px 0/1px 8px no-repeat,
    repeating-linear-gradient(90deg, #777 0 1px, transparent 1px 2px) 31px 8px/9px 1px no-repeat;
}
.gitem { display: flex; align-items: center; height: 16px; padding: 0 4px 0 4px; }
.gt { margin-left: 6px; }
.gitem.sel { background: #316ac5; color: #fff; }

.prop { flex: 1; min-width: 0; margin-left: 7px; display: flex; flex-direction: column; padding-top: 7px; margin-right: 6px; }
.tabs { height: 21px; flex: none; border-bottom: 1px solid #bbb; margin-right: -6px; }
.tab { display: inline-block; box-sizing: border-box; height: 21px; width: 60px; background: #fff; border: 1px solid #ccc; border-bottom: 0; text-align: center; line-height: 20px; }
.ptable { flex: 1; min-height: 0; margin-top: 4px; margin-bottom: 5px; background: #fff; border: 1px solid #b0b0b0; border-width: 1px 2px 2px 1px; box-sizing: border-box; display: flex; overflow: hidden; }
.pcols { flex: 1; min-width: 0; overflow: hidden; padding-left: 1px; }
.prow { display: grid; grid-template-columns: 21px 191px 127px 31px; width: 370px; height: 19px; }
.prow > span { box-sizing: border-box; border-bottom: 1px solid #c0c0c0; border-right: 1px solid #c0c0c0; overflow: hidden; display: block; line-height: 18px; }
.gut { background: linear-gradient(#fafafa, #eaeaea); text-align: center; color: #222; }
.pn { padding-left: 19px; position: relative; }
.pv { padding-left: 2px; color: #111; }
.phead { height: 23px; }
.phead > span { line-height: 22px; }
.hn { text-align: center; padding-left: 0; background: linear-gradient(#fff, #e8e8e8); }
.hv { text-align: center; padding-left: 0; color: #5a1a6a; background: linear-gradient(#fbdca0, #f2c268); }
.phead .gut { background: #eee; }
.blue { color: #0000e6; }
.gray { color: #9a9a9a; }
.pn.kid {
  padding-left: 29px;
  background:
    linear-gradient(#aaa, #aaa) 7px 0/1px 100% no-repeat,
    linear-gradient(#aaa, #aaa) 8px 9px/16px 1px no-repeat;
}
.pn.kid.kend {
  background:
    linear-gradient(#aaa, #aaa) 7px 0/1px 10px no-repeat,
    linear-gradient(#aaa, #aaa) 8px 9px/16px 1px no-repeat;
}
.minus { position: absolute; left: 2px; top: 3px; width: 12px; height: 12px; box-sizing: border-box; border: 1px solid #999; background: #fff; }
.minus i { position: absolute; left: 2px; top: 4px; width: 6px; height: 2px; background: #111; }
.psel .gut { background: #fad08a; color: #5a1a6a; }
.psel .pn { background: #0078d7; color: #fff; }
.psel .pv { background: #d5e6f6; }
.rb { display: inline-block; vertical-align: -1px; margin: 0 1px; }
.psb { width: 14px; flex: none; margin-right: 1px; display: flex; align-items: flex-end; justify-content: center; background: linear-gradient(90deg, #fff, #f2f2f2); padding-bottom: 2px; }

.status { height: 20px; flex: none; display: flex; gap: 2px; background: #fff; border-top: 1px solid #ddd; box-sizing: border-box; }
.sc { box-sizing: border-box; border: 1px solid #ddd; background: #f7f7f7; padding-left: 2px; line-height: 17px; height: 19px; }
.s1 { width: 148px; } .s2 { width: 78px; } .s3 { width: 98px; } .s4 { width: 48px; } .s5 { width: 912px; } .s6 { flex: 1; }

.taskbar { height: 40px; flex: none; display: flex; align-items: center; background: #0a1a20; color: #eee; }
.tstart { width: 48px; height: 40px; background: #000; display: flex; align-items: center; justify-content: center; flex: none; }
.tsearch { width: 344px; height: 40px; flex: none; background: #f0f0f0; display: flex; align-items: center; box-sizing: border-box; padding-left: 10px; color: #444; }
.tq { margin-left: 10px; font-size: 14px; }
.tmic { margin-left: auto; margin-right: 12px; }
.tsk { display: flex; align-items: center; justify-content: center; position: relative; height: 40px; }
.tbell { position: absolute; left: 28px; top: 2px; }
.tsep { width: 1px; height: 20px; background: #555; margin-left: 1px; flex: none; }
.tgap { width: 15px; flex: none; }
.tsb { width: 43.500px; height: 40px; display: flex; align-items: center; justify-content: center; flex: none; box-sizing: border-box; }
.tsb.und { border-bottom: 2px solid #76b9ed; padding-top: 2px; }
.tsb.act { background: #2f4048; }
.t2 { margin-left: 15px; }
.tlink { margin-left: 12px; width: 26px; color: #ccc; }
.tppl { margin-left: 22px; width: 27px; margin-right: 8px; }
.ttr { display: flex; align-items: center; justify-content: center; height: 40px; flex: none; }
.tzh { width: 29px; text-align: center; font-size: 14px; }
.tsg { width: 28px; display: flex; justify-content: center; }
.clock { width: 68px; margin-left: 20px; display: flex; flex-direction: column; align-items: center; line-height: 19px; }
.tnotif { margin-left: 13px; }

.dlg { position: absolute; left: 652px; top: 106px; width: 712px; height: 570px; box-sizing: border-box; border: 2px solid #555; border-width: 1px 0 1px 2px; display: flex; flex-direction: column; background: linear-gradient(#bccbdc, #d6e2ef 60px); padding: 0 4px 0 8px; }
.dlgt { height: 30px; flex: none; line-height: 36px; color: #9aa0a8; font-size: 12px; margin-left: -2px; }
.dlgc { flex: 1; min-height: 0; background: #f4f4f4; border-top: 1px solid #fff; display: flex; flex-direction: column; padding: 5px 3px 5px 3px; }
.dtb { height: 24px; flex: none; display: flex; align-items: center; gap: 10px; background: linear-gradient(#fafafa, #eee); border-radius: 3px; }
.grip { width: 2px; height: 14px; margin-left: 3px; margin-right: -3px; border-left: 2px dotted #aaa; flex: none; }
.dtb .sep { height: 16px; margin: 0 -2px; }
.dtb .grip + .dti { margin-left: -2px; }
.dtb2 { height: 27px; width: 196px; margin-top: 3px; flex: none; display: flex; align-items: center; gap: 2px; background: linear-gradient(#fafafa, #eee); border-radius: 3px; }
.dtb2 .grip { margin-right: 3px; }
.dcombo { width: 133px; height: 23px; box-sizing: border-box; border: 1px solid #777; display: flex; align-items: center; justify-content: space-between; padding: 0 3px; color: #999; }
.canvas { flex: none; height: 442px; margin-top: 2px; border: 2px solid #f00; background: #000; box-sizing: border-box; }
.cv { display: block; }
.cvs { font-family: "Liberation Mono", monospace; font-size: 10px; }
.cvt text { font-family: "Liberation Serif", serif; font-size: 24px; }
.cvt text.cj { font-family: "Noto Sans CJK SC", sans-serif; font-size: 23px; }
.dstatus { margin-top: 6px; height: 23px; flex: none; display: flex; gap: 2px; }
.d1 { width: 148px; border: 1px solid #ddd; box-sizing: border-box; padding: 3px 6px; }
.d2 { flex: 1; border: 1px solid #ddd; }

.mark { position: absolute; left: 526px; top: 114px; width: 119px; height: 169px; box-sizing: border-box; border: 7px solid #f00; }

.badge { position: absolute; left: 856px; top: -31px; width: 46px; height: 46px; box-sizing: border-box; border-radius: 50%; border: 2px solid #a8a8a8; background: #4cc24c; color: #fff; font-weight: 700; font-size: 12px; display: flex; justify-content: center; align-items: flex-end; padding-bottom: 1px; line-height: 14px; }
.ime { position: absolute; left: 838px; top: 14px; width: 183px; height: 23px; box-sizing: border-box; border: 1px solid #b5c4d6; background: #f4f7fb; display: flex; align-items: center; gap: 5px; padding-left: 10px; }
.imz { color: #1a6fc8; font-weight: 700; font-size: 15px; width: 16px; }
.imd { color: #1a6fc8; font-weight: 700; font-size: 13px; width: 20px; text-align: center; }
.imelogo { position: absolute; left: 811px; top: 11px; }
</style>

<style>
html, body { margin: 0; background: #fff; }
.lat { font-family: "Liberation Mono", monospace; font-size: 11px; letter-spacing: -.6px; position: relative; top: -1px; }
</style>
